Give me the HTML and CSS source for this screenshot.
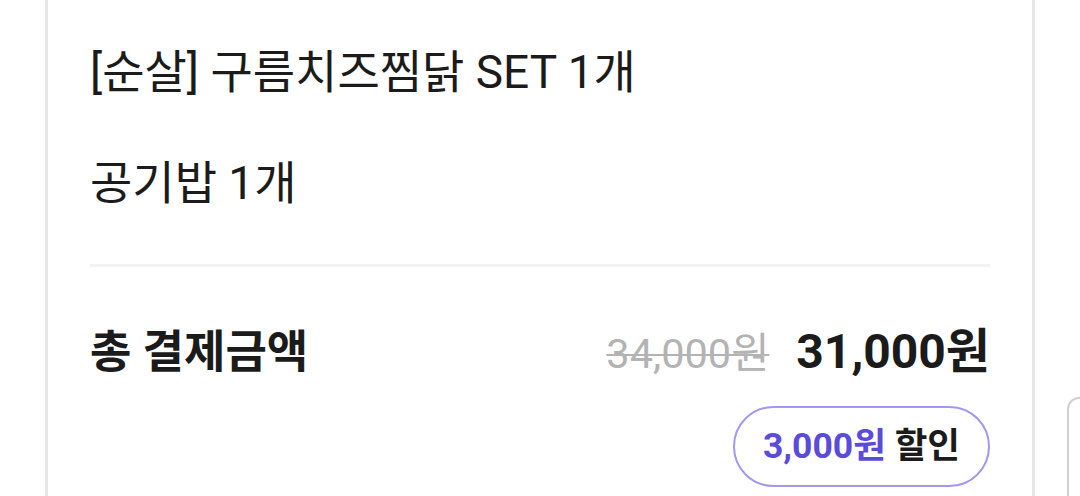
FILE: index.html
```html
<!DOCTYPE html>
<html lang="ko">
<head>
    <meta charset="UTF-8">
    <meta name="viewport" content="width=device-width, initial-scale=1.0">
    <title>주문 내역</title>
    <link rel="stylesheet" href="styles.css">
</head>
<body>
    <div class="track">
        <div class="order-card">
            <div class="items">
                <div class="item">[순살] 구름치즈찜닭 SET 1개</div>
                <div class="item">공기밥 1개</div>
            </div>
            <div class="divider"></div>
            <div class="total-row">
                <span class="total-label">총 결제금액</span>
                <div class="prices">
                    <span class="old-price">34,000원</span>
                    <span class="new-price">31,000원</span>
                </div>
            </div>
            <div class="discount-row">
                <span class="discount-badge"><span class="discount-amount">3,000원</span> 할인</span>
            </div>
        </div>
        <div class="next-card"></div>
    </div>
</body>
</html>
```

FILE: styles.css
```css
body {
    margin: 0;
    background: #fff;
    font-family: Roboto, "Noto Sans CJK KR", sans-serif;
    color: #1b1b1b;
    overflow: hidden;
}
.track {
    display: flex;
    align-items: flex-start;
    gap: 32px;
    padding-left: 45px;
}
.order-card {
    flex: 0 0 990px;
    box-sizing: border-box;
    min-height: 540px;
    padding: 42px 42px 40px;
    border: 3px solid #e7e7e7;
    border-top: none;
}
.items {
    display: flex;
    flex-direction: column;
    gap: 51px;
}
.item {
    font-size: 46px;
    line-height: 60px;
}
.divider {
    height: 3px;
    margin-top: 51px;
    background: #f3f3f3;
}
.total-row {
    display: flex;
    justify-content: space-between;
    align-items: baseline;
    margin-top: 55px;
    line-height: 60px;
}
.total-label {
    font-size: 45px;
    font-weight: bold;
}
.prices {
    display: flex;
    align-items: baseline;
    gap: 27px;
}
.old-price {
    font-size: 41.5px;
    color: #b3b3b3;
    text-decoration: line-through;
    text-decoration-thickness: 2px;
}
.new-price {
    font-size: 48px;
    font-weight: bold;
}
.discount-row {
    display: flex;
    justify-content: flex-end;
    margin-top: 22px;
}
.discount-badge {
    padding: 0 28px;
    border: 2px solid #a597ee;
    border-radius: 999px;
    font-size: 35.5px;
    font-weight: bold;
    line-height: 77px;
}
.discount-amount {
    color: #5b4bdb;
}
.next-card {
    flex: 0 0 120px;
    height: 200px;
    margin-top: 397px;
    border: 2px solid #d0d0d0;
    border-radius: 12px;
}
```
